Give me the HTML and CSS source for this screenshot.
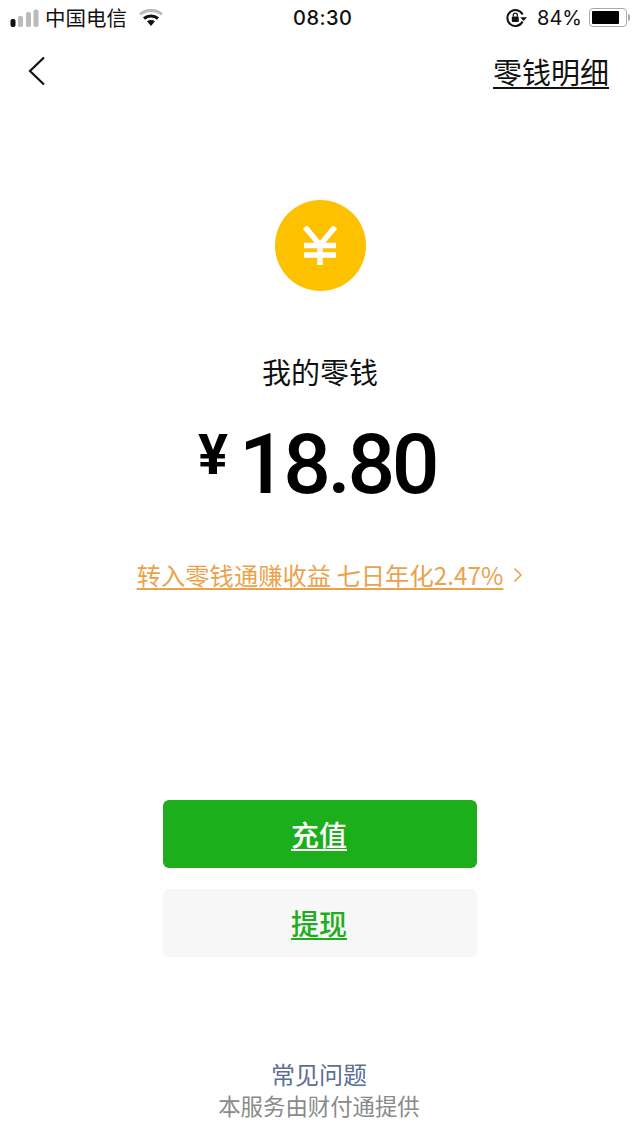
FILE: index.html
```html
<!DOCTYPE html>
<html lang="zh">
<head>
<meta charset="utf-8">
<title>我的零钱</title>
<link rel="stylesheet" href="styles.css">
</head>
<body>
<div class="page">
  <div class="status">
    <div class="status-left">
      <svg class="signal" width="30" height="18" viewBox="0 0 30 18">
        <rect x="0.5" y="10" width="5" height="8" rx="2" fill="#111"/>
        <rect x="8" y="7" width="5" height="11" rx="2" fill="#bbb"/>
        <rect x="16" y="3" width="5" height="15" rx="2" fill="#bbb"/>
        <rect x="23.5" y="0.5" width="5" height="17.5" rx="2" fill="#bbb"/>
      </svg>
      <span class="carrier">中国电信</span>
      <svg class="wifi" width="24" height="18" viewBox="0 0 24 18">
        <path d="M1 5.5C7 0 17 0 23 5.5" fill="none" stroke="#bbb" stroke-width="3"/>
        <path d="M5 9.5C9 6 15 6 19 9.5" fill="none" stroke="#111" stroke-width="3"/>
        <path d="M8 12.3C10.5 10.4 13.5 10.4 16 12.3L12 17Z" fill="#111"/>
      </svg>
    </div>
    <div class="time">08:30</div>
    <div class="status-right">
      <svg class="lock" width="21" height="20" viewBox="0 0 21 20">
        <path d="M16.6 6.5A8 8 0 1 0 16.6 13.5" fill="none" stroke="#111" stroke-width="2"/>
        <path d="M14.2 9.2H21L17.6 13Z" fill="#111"/>
        <rect x="5.8" y="8.5" width="7" height="5.5" rx="1" fill="#111"/>
        <path d="M7.3 8.5V7.2a2 2 0 0 1 4 0V8.5" fill="none" stroke="#111" stroke-width="1.3"/>
      </svg>
      <span class="percent">84%</span>
      <div class="battery"><div class="battery-level"></div></div>
      <div class="battery-tip"></div>
    </div>
  </div>

  <div class="nav">
    <svg class="back" width="18" height="30" viewBox="0 0 18 30">
      <path d="M16 1.5L2 15L16 28.5" fill="none" stroke="#111" stroke-width="2.2"/>
    </svg>
    <a class="detail">零钱明细</a>
  </div>

  <div class="coin">
    <svg width="36" height="40" viewBox="0 0 36 40">
      <path d="M3 1L18 19L33 1M2 19.5H34M2 29H34M18 19V39" fill="none" stroke="#fff" stroke-width="5.5"/>
    </svg>
  </div>
  <div class="label">我的零钱</div>
  <div class="amount"><span class="yen">¥</span><span class="sum">18.80</span></div>
  <div class="promo"><a>转入零钱通赚收益 七日年化2.47%</a>
    <svg width="10" height="16" viewBox="0 0 10 16">
      <path d="M1.5 1.5L8 8L1.5 14.5" fill="none" stroke="#eba24c" stroke-width="1.6"/>
    </svg>
  </div>

  <a class="btn btn-green">充值</a>
  <a class="btn btn-gray">提现</a>

  <div class="footer">
    <div class="faq">常见问题</div>
    <div class="provider">本服务由财付通提供</div>
  </div>
</div>
</body>
</html>
```

FILE: styles.css
```css
body {
  margin: 0;
  background: #fff;
  font-family: "Noto Sans CJK SC", "Liberation Sans", sans-serif;
  color: #111;
}

.page {
  height: 1139px;
  display: flex;
  flex-direction: column;
  align-items: center;
  overflow: hidden;
}

a {
  text-decoration: underline;
  text-underline-offset: 3px;
}

/* status bar */
.status {
  width: 100%;
  height: 35px;
  box-sizing: border-box;
  padding: 0 10px 0 10px;
  display: flex;
  align-items: center;
  justify-content: space-between;
  position: relative;
}
.status-left, .status-right {
  display: flex;
  align-items: center;
}
.signal { margin-right: 5px; }
.carrier { font-size: 20.5px; line-height: 35px; }
.wifi { margin-left: 12px; }
.time {
  position: absolute;
  left: 293px;
  font-family: Inter, sans-serif;
  font-size: 20px;
  font-weight: 500;
  letter-spacing: 0.5px;
}
.percent {
  font-family: Inter, sans-serif;
  font-size: 20px;
  margin: 0 7px 0 10px;
}
.battery {
  width: 38px;
  height: 19px;
  border: 1.5px solid #aaa;
  border-radius: 4px;
  padding: 2px;
  box-sizing: border-box;
  display: flex;
}
.battery-level {
  width: 84%;
  background: #000;
  border-radius: 1px;
}
.battery-tip {
  width: 2px;
  height: 7px;
  margin-left: 1px;
  background: #aaa;
  border-radius: 0 2px 2px 0;
}

/* nav */
.nav {
  width: 100%;
  height: 71px;
  box-sizing: border-box;
  padding: 0 31px 0 28px;
  display: flex;
  align-items: center;
  justify-content: space-between;
}
.detail {
  font-size: 29px;
  line-height: 70px;
}

.coin {
  width: 91px;
  height: 91px;
  margin-top: 94px;
  border-radius: 50%;
  background: #fdc100;
  display: flex;
  align-items: center;
  justify-content: center;
}

.label {
  margin-top: 58px;
  font-size: 29px;
  line-height: 44px;
}

.amount {
  margin-top: 26px;
  display: flex;
  align-items: flex-start;
  height: 92px;
  margin-left: -6px;
  color: #000;
}
.yen {
  font-family: Roboto, sans-serif;
  font-size: 56px;
  font-weight: 700;
  line-height: 60px;
  margin: 6px 11px 0 0;
}
.sum {
  font-family: Roboto, sans-serif;
  font-size: 84px;
  font-weight: 500;
  line-height: 92px;
  letter-spacing: -3.5px;
}

.promo {
  margin-top: 44px;
  margin-left: 20px;
  font-size: 24.3px;
  line-height: 40px;
  color: #eba24c;
  display: flex;
  align-items: center;
  gap: 10px;
}

.btn {
  display: block;
  width: 314px;
  height: 68px;
  box-sizing: border-box;
  padding-right: 2px;
  border-radius: 6px;
  text-align: center;
  font-size: 28px;
  font-weight: 500;
  line-height: 68px;
}
.btn-green {
  margin-top: 205px;
  background: #1dae1c;
  color: #fff;
}
.btn-gray {
  margin-top: 21px;
  background: #f7f7f7;
  color: #1dae1c;
}

.footer {
  margin-top: 99px;
  margin-right: 2px;
  text-align: center;
}
.faq {
  font-size: 24px;
  line-height: 36px;
  color: #5c6f96;
}
.provider {
  font-size: 22.4px;
  line-height: 27px;
  color: #8a8a8a;
}
```
